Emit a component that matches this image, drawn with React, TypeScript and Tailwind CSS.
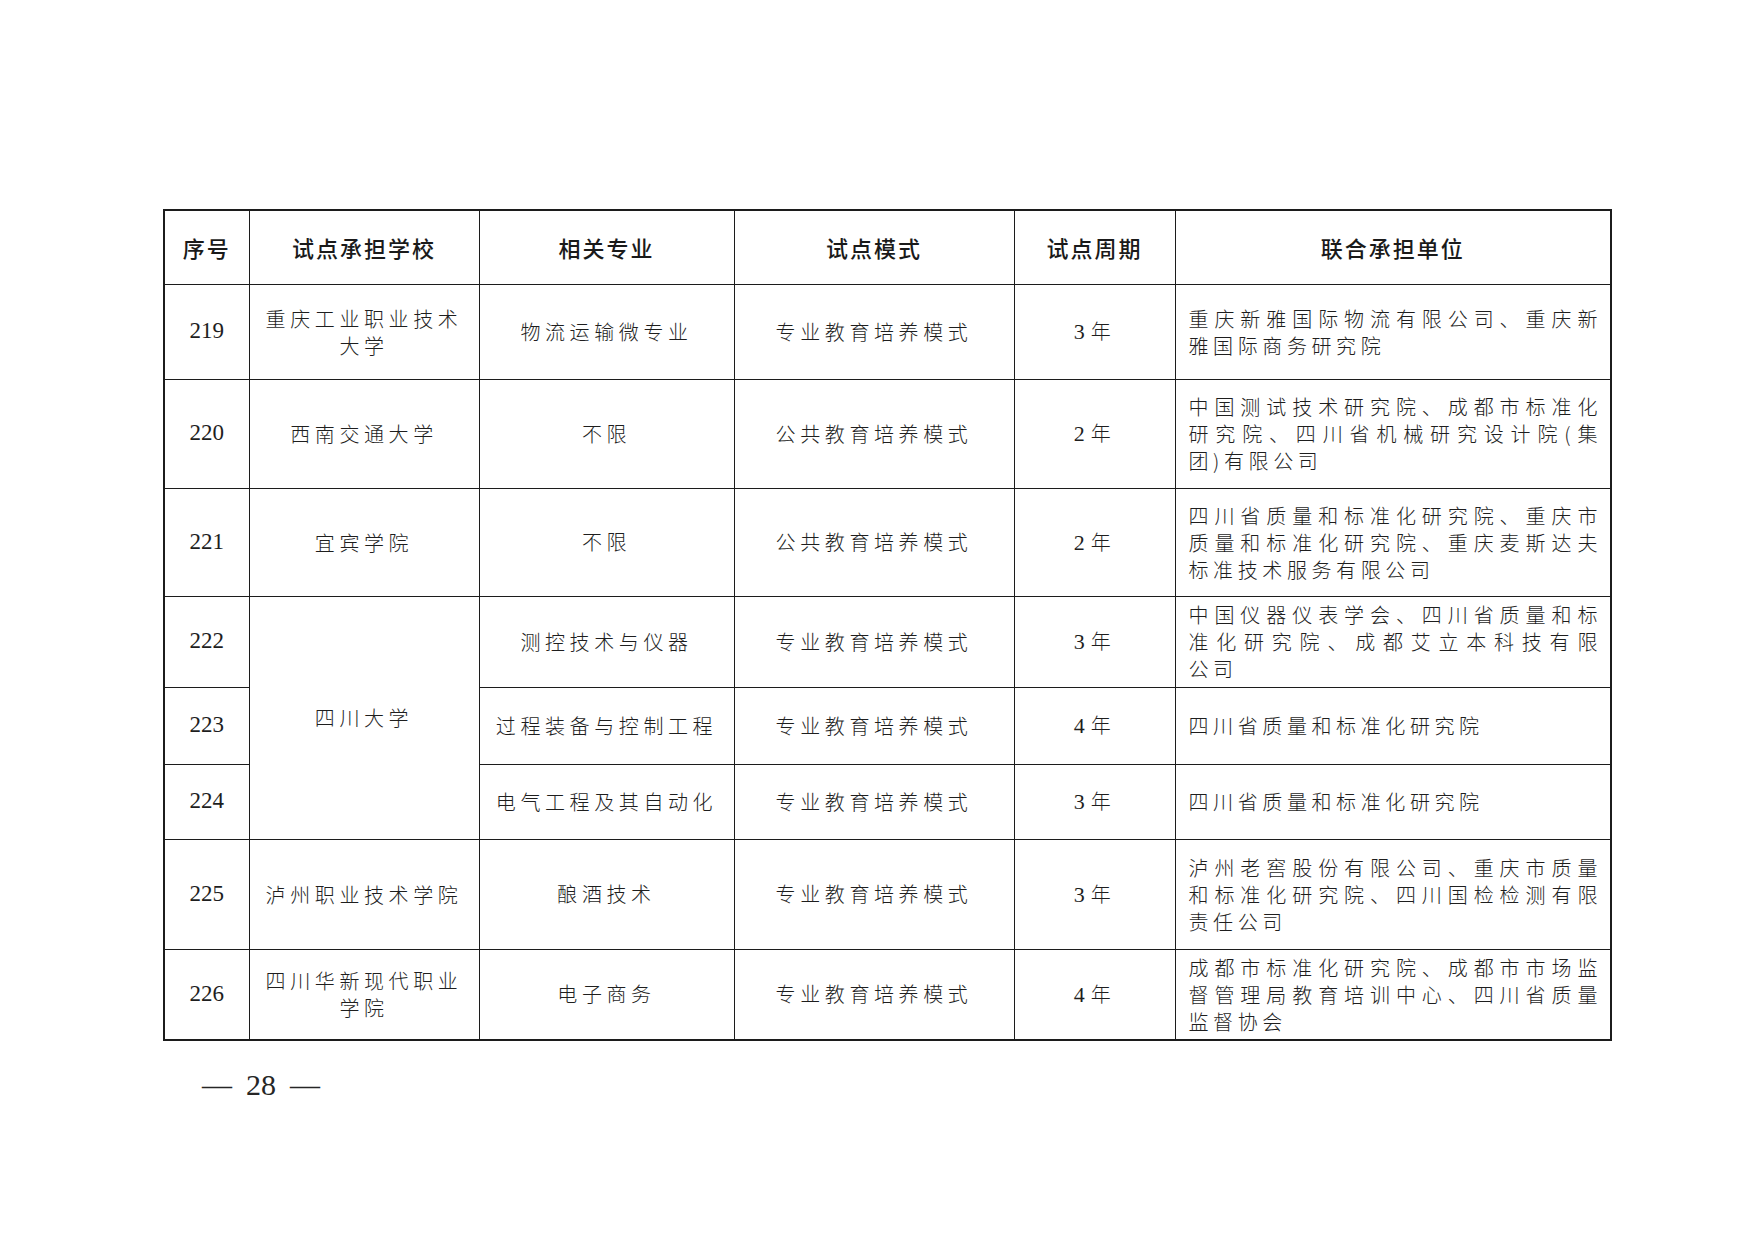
import React from 'react';

type Row = {
  no: string;
  school?: string[];
  span?: number;
  major: string;
  mode: string;
  years: string;
  units: string[];
  h: string;
};

const rows: Row[] = [
  {
    no: '219',
    school: ['重庆工业职业技术', '大学'],
    major: '物流运输微专业',
    mode: '专业教育培养模式',
    years: '3',
    units: ['重庆新雅国际物流有限公司、重庆新', '雅国际商务研究院'],
    h: 'h-[95px]',
  },
  {
    no: '220',
    school: ['西南交通大学'],
    major: '不限',
    mode: '公共教育培养模式',
    years: '2',
    units: ['中国测试技术研究院、成都市标准化', '研究院、四川省机械研究设计院(集', '团)有限公司'],
    h: 'h-[109px]',
  },
  {
    no: '221',
    school: ['宜宾学院'],
    major: '不限',
    mode: '公共教育培养模式',
    years: '2',
    units: ['四川省质量和标准化研究院、重庆市', '质量和标准化研究院、重庆麦斯达夫', '标准技术服务有限公司'],
    h: 'h-[108px]',
  },
  {
    no: '222',
    school: ['四川大学'],
    span: 3,
    major: '测控技术与仪器',
    mode: '专业教育培养模式',
    years: '3',
    units: ['中国仪器仪表学会、四川省质量和标', '准化研究院、成都艾立本科技有限', '公司'],
    h: 'h-[91px]',
  },
  {
    no: '223',
    major: '过程装备与控制工程',
    mode: '专业教育培养模式',
    years: '4',
    units: ['四川省质量和标准化研究院'],
    h: 'h-[77px]',
  },
  {
    no: '224',
    major: '电气工程及其自动化',
    mode: '专业教育培养模式',
    years: '3',
    units: ['四川省质量和标准化研究院'],
    h: 'h-[75px]',
  },
  {
    no: '225',
    school: ['泸州职业技术学院'],
    major: '酿酒技术',
    mode: '专业教育培养模式',
    years: '3',
    units: ['泸州老窖股份有限公司、重庆市质量', '和标准化研究院、四川国检检测有限', '责任公司'],
    h: 'h-[110px]',
  },
  {
    no: '226',
    school: ['四川华新现代职业', '学院'],
    major: '电子商务',
    mode: '专业教育培养模式',
    years: '4',
    units: ['成都市标准化研究院、成都市市场监', '督管理局教育培训中心、四川省质量', '监督协会'],
    h: 'h-[91px]',
  },
];

const cell = 'border-[1.5px] border-[#1c1c1c] align-middle';
const cjk = "font-['Noto_Sans_CJK_SC',sans-serif]";
const serif = "font-['Liberation_Serif','Noto_Sans_CJK_SC',serif]";
const headers = ['序号', '试点承担学校', '相关专业', '试点模式', '试点周期', '联合承担单位'];

export default function App() {
  return (
    <div className="min-h-[1240px] w-[1754px] bg-white pl-[163px] pt-[209px] text-[#262626]">
      <table className="table-fixed border-collapse border-2 border-[#1c1c1c]">
        <colgroup>
          <col className="w-[85px]" />
          <col className="w-[230px]" />
          <col className="w-[255px]" />
          <col className="w-[280px]" />
          <col className="w-[161px]" />
          <col className="w-[436px]" />
        </colgroup>
        <thead>
          <tr className="h-[74px]">
            {headers.map((t) => (
              <th
                key={t}
                className={`${cell} ${cjk} text-center text-[22px] font-medium tracking-[2px] text-[#1a1a1a]`}
              >
                {t}
              </th>
            ))}
          </tr>
        </thead>
        <tbody className={`${cjk} text-[20px] font-light tracking-[4.6px] text-[#1e1e1e]`}>
          {rows.map((r) => (
            <tr key={r.no} className={r.h}>
              <td className={`${cell} ${serif} text-center text-[23px] font-normal tracking-normal`}>{r.no}</td>
              {r.school && (
                <td rowSpan={r.span || 1} className={`${cell} px-2 text-center leading-[27px]`}>
                  {r.school.map((s) => (
                    <div key={s}>{s}</div>
                  ))}
                </td>
              )}
              <td className={`${cell} text-center`}>{r.major}</td>
              <td className={`${cell} text-center`}>{r.mode}</td>
              <td className={`${cell} text-center`}>
                <span className={`${serif} text-[22px] font-normal tracking-normal`}>{r.years}</span>
                <span className="ml-[6px]">年</span>
              </td>
              <td className={`${cell} pl-[13px] pr-[8px] leading-[27px]`}>
                {r.units.map((l, i) => (
                  <div
                    key={i}
                    className={i < r.units.length - 1 ? 'text-justify [text-align-last:justify]' : 'text-left'}
                  >
                    {l}
                  </div>
                ))}
              </td>
            </tr>
          ))}
        </tbody>
      </table>
      <div className={`${serif} ml-[39px] mt-[21px] flex items-center gap-[14px] text-[30px] text-[#262626]`}>
        <span>—</span>
        <span>28</span>
        <span>—</span>
      </div>
    </div>
  );
}
